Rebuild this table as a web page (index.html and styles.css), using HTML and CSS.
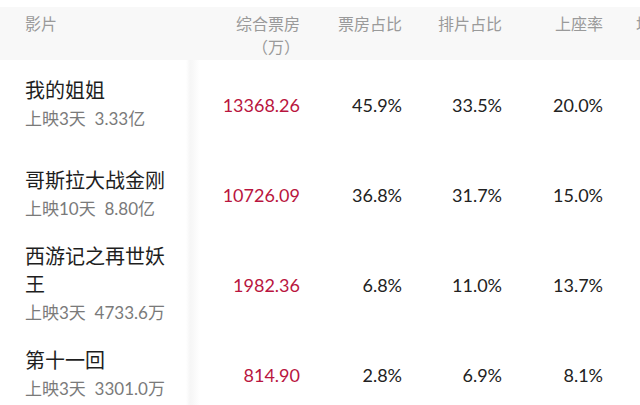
FILE: index.html
```html
<!DOCTYPE html>
<html lang="zh-CN">
<head>
<meta charset="utf-8">
<link rel="stylesheet" href="styles.css">
</head>
<body>
<div class="table">
  <div class="row head">
    <div class="cell c-name">影片</div>
    <div class="cell c-num">综合票房<br>（万）</div>
    <div class="cell c-num w102">票房占比</div>
    <div class="cell c-num">排片占比</div>
    <div class="cell c-num w101">上座率</div>
    <div class="cell c-num c-last">场均人次</div>
  </div>
  <div class="row body first">
    <div class="cell c-name"><div class="title">我的姐姐</div><div class="sub">上映3天&nbsp;&nbsp;3.33亿</div></div>
    <div class="cell c-num red">13368.26</div>
    <div class="cell c-num w102">45.9%</div>
    <div class="cell c-num">33.5%</div>
    <div class="cell c-num w101">20.0%</div>
  </div>
  <div class="row body">
    <div class="cell c-name"><div class="title">哥斯拉大战金刚</div><div class="sub">上映10天&nbsp;&nbsp;8.80亿</div></div>
    <div class="cell c-num red">10726.09</div>
    <div class="cell c-num w102">36.8%</div>
    <div class="cell c-num">31.7%</div>
    <div class="cell c-num w101">15.0%</div>
  </div>
  <div class="row body">
    <div class="cell c-name"><div class="title">西游记之再世妖王</div><div class="sub">上映3天&nbsp;&nbsp;4733.6万</div></div>
    <div class="cell c-num red">1982.36</div>
    <div class="cell c-num w102">6.8%</div>
    <div class="cell c-num">11.0%</div>
    <div class="cell c-num w101">13.7%</div>
  </div>
  <div class="row body">
    <div class="cell c-name"><div class="title">第十一回</div><div class="sub">上映3天&nbsp;&nbsp;3301.0万</div></div>
    <div class="cell c-num red">814.90</div>
    <div class="cell c-num w102">2.8%</div>
    <div class="cell c-num">6.9%</div>
    <div class="cell c-num w101">8.1%</div>
  </div>
</div>
</body>
</html>
```

FILE: styles.css
```css
html, body {
  margin: 0;
  padding: 0;
  background: #ffffff;
  overflow: hidden;
}
body {
  width: 640px;
  height: 405px;
  font-family: "Lato", "Noto Sans CJK SC", sans-serif;
  padding-top: 7px;
  box-sizing: border-box;
}
.table {
  width: 720px;
  background: linear-gradient(to right, #fff 0, #fff 186px, #f6f6f6 190px, #f8f8f8 193px, #fff 200px, #fff 100%);
}
.row {
  display: flex;
}
.cell {
  flex: none;
  box-sizing: border-box;
}
.c-name {
  width: 200px;
  padding-left: 25px;
  padding-right: 30px;
}
.c-num {
  width: 100px;
  text-align: right;
}
.w102 { width: 102px; }
.w101 { width: 101px; }
.c-last { width: 97px; }

.head {
  background: #f8f8f8;
  height: 53px;
  padding-top: 5px;
  box-sizing: border-box;
  color: #9a9a9a;
  font-size: 16px;
  line-height: 23px;
  font-family: "Noto Sans CJK SC", sans-serif;
}
.body {
  align-items: center;
  padding: 9px 0 10px;
}
.body.first {
  padding-top: 16px;
  padding-bottom: 24px;
}
.title {
  font-family: "Noto Sans CJK SC", sans-serif;
  font-size: 20px;
  line-height: 28px;
  color: #1e1e1e;
}
.sub {
  font-size: 17px;
  line-height: 29px;
  color: #7a7a7a;
  white-space: nowrap;
}
.body .c-num {
  font-size: 18px;
  color: #222;
}
.body .red {
  color: #b91540;
}
```
